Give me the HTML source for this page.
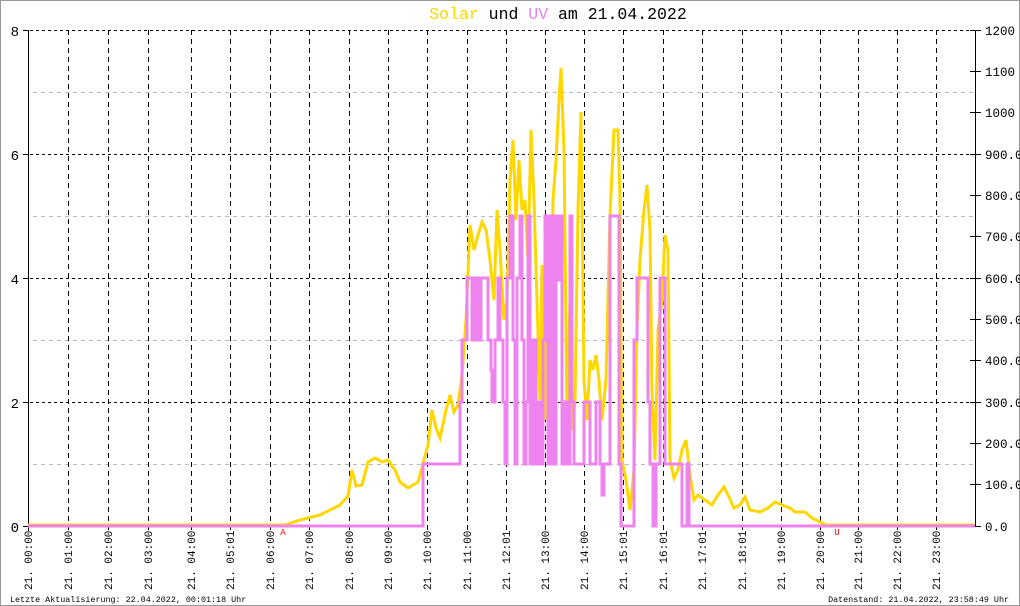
<!DOCTYPE html>
<html><head><meta charset="utf-8"><style>
html,body{margin:0;padding:0;background:#fff;}
svg{display:block;}
text{font-family:"Liberation Mono","DejaVu Sans Mono",monospace;}
</style></head><body>
<svg width="1020" height="606" viewBox="0 0 1020 606" xmlns="http://www.w3.org/2000/svg">
<rect x="0.5" y="0.5" width="1019" height="605" fill="#fff" stroke="#999" stroke-width="1"/>
<text x="558" y="19" font-size="16.5" text-anchor="middle"><tspan fill="#FFD700">Solar</tspan> und <tspan fill="#EE82EE">UV</tspan> am 21.04.2022</text>
<g stroke="#bbb" stroke-width="1" stroke-dasharray="4 4" shape-rendering="crispEdges">
<line x1="33" y1="92.5" x2="975" y2="92.5"/><line x1="33" y1="216.5" x2="975" y2="216.5"/><line x1="33" y1="340.5" x2="975" y2="340.5"/><line x1="33" y1="464.5" x2="975" y2="464.5"/>
</g>
<g stroke="#000" stroke-width="1" stroke-dasharray="3 3" shape-rendering="crispEdges">
<line x1="24" y1="30.5" x2="980" y2="30.5"/><line x1="24" y1="154.5" x2="980" y2="154.5"/><line x1="24" y1="278.5" x2="980" y2="278.5"/><line x1="24" y1="402.5" x2="980" y2="402.5"/>
</g>
<g stroke="#000" stroke-width="1" stroke-dasharray="5 4" shape-rendering="crispEdges">
<line x1="68.5" y1="30" x2="68.5" y2="531"/><line x1="108.5" y1="30" x2="108.5" y2="531"/><line x1="148.5" y1="30" x2="148.5" y2="531"/><line x1="191.5" y1="30" x2="191.5" y2="531"/><line x1="230.5" y1="30" x2="230.5" y2="531"/><line x1="270.5" y1="30" x2="270.5" y2="531"/><line x1="309.5" y1="30" x2="309.5" y2="531"/><line x1="349.5" y1="30" x2="349.5" y2="531"/><line x1="388.5" y1="30" x2="388.5" y2="531"/><line x1="427.5" y1="30" x2="427.5" y2="531"/><line x1="467.5" y1="30" x2="467.5" y2="531"/><line x1="506.5" y1="30" x2="506.5" y2="531"/><line x1="545.5" y1="30" x2="545.5" y2="531"/><line x1="584.5" y1="30" x2="584.5" y2="531"/><line x1="623.5" y1="30" x2="623.5" y2="531"/><line x1="663.5" y1="30" x2="663.5" y2="531"/><line x1="702.5" y1="30" x2="702.5" y2="531"/><line x1="742.5" y1="30" x2="742.5" y2="531"/><line x1="781.5" y1="30" x2="781.5" y2="531"/><line x1="820.5" y1="30" x2="820.5" y2="531"/><line x1="858.5" y1="30" x2="858.5" y2="531"/><line x1="897.5" y1="30" x2="897.5" y2="531"/><line x1="936.5" y1="30" x2="936.5" y2="531"/>
</g>
<g stroke="#000" stroke-width="1" shape-rendering="crispEdges">
<line x1="28.5" y1="30" x2="28.5" y2="531"/><line x1="975.5" y1="30" x2="975.5" y2="527"/>
<line x1="23" y1="30.5" x2="29" y2="30.5"/><line x1="23" y1="154.5" x2="29" y2="154.5"/><line x1="23" y1="278.5" x2="29" y2="278.5"/><line x1="23" y1="402.5" x2="29" y2="402.5"/><line x1="23" y1="526.5" x2="29" y2="526.5"/>
<line x1="970" y1="30.5" x2="981" y2="30.5"/><line x1="970" y1="71.5" x2="981" y2="71.5"/><line x1="970" y1="112.5" x2="981" y2="112.5"/><line x1="970" y1="154.5" x2="981" y2="154.5"/><line x1="970" y1="195.5" x2="981" y2="195.5"/><line x1="970" y1="236.5" x2="981" y2="236.5"/><line x1="970" y1="278.5" x2="981" y2="278.5"/><line x1="970" y1="319.5" x2="981" y2="319.5"/><line x1="970" y1="360.5" x2="981" y2="360.5"/><line x1="970" y1="402.5" x2="981" y2="402.5"/><line x1="970" y1="443.5" x2="981" y2="443.5"/><line x1="970" y1="484.5" x2="981" y2="484.5"/><line x1="970" y1="526.5" x2="981" y2="526.5"/>
</g>
<g font-size="14" fill="#000" text-anchor="end">
<text x="19" y="36">8</text><text x="19" y="160">6</text><text x="19" y="284">4</text><text x="19" y="408">2</text><text x="19" y="532">0</text>
</g>
<g font-size="12.5" fill="#000">
<text x="985" y="35">1200</text><text x="985" y="76">1100</text><text x="985" y="117">1000</text><text x="985" y="159">900.0</text><text x="985" y="200">800.0</text><text x="985" y="241">700.0</text><text x="985" y="283">600.0</text><text x="985" y="324">500.0</text><text x="985" y="365">400.0</text><text x="985" y="407">300.0</text><text x="985" y="448">200.0</text><text x="985" y="489">100.0</text><text x="985" y="531">0.0</text>
</g>
<polyline fill="none" stroke="#FFD700" stroke-width="3" points="28,525 285,525 300,520 320,515 340,505 348,496 352,470 356,486 362,485 368,462 375,458 382,462 388,460 395,470 400,482 408,488 418,482 424,460 428,445 432,410 436,428 440,438 446,410 450,395 454,412 458,405 462,375 466,320 470,225 474,250 478,235 482,222 486,230 490,260 494,300 497,210 500,250 504,320 507,300 510,180 513,140 516,220 519,160 522,210 525,200 528,260 531,130 534,200 537,300 540,400 542,265 545,420 548,250 550,400 553,200 556,160 559,100 561,68 564,150 567,420 570,300 572,430 575,400 578,210 581,112 584,380 587,420 590,360 593,370 596,355 599,380 602,420 606,380 610,215 614,130 618,130 620,200 622,460 626,480 630,510 634,470 637,330 640,260 644,210 647,185 650,230 652,390 655,460 658,330 662,300 665,235 668,250 670,460 674,478 678,470 682,450 686,440 690,475 694,500 698,495 705,500 712,505 718,495 724,487 728,495 734,508 740,505 745,497 750,510 760,512 768,508 775,502 782,505 790,508 795,512 805,512 812,518 820,522 826,525 975,525"/>
<polyline fill="none" stroke="#EE82EE" stroke-width="3" points="28,526 423,526 423,464 460,464 460,402 462,402 462,340 467,340 467,278 472,278 472,340 475,340 475,278 478,278 478,340 481,340 481,278 488,278 488,340 491,340 491,370 492,370 492,402 495,402 495,340 498,340 498,278 500,278 500,340 503,340 503,402 505,402 505,464 507,464 507,278 510,278 510,216 513,216 513,340 515,340 515,464 517,464 517,278 520,278 520,216 522,216 522,340 524,340 524,464 526,464 526,402 528,402 528,216 530,216 530,464 533,464 533,340 536,340 536,464 538,464 538,402 540,402 540,464 543,464 543,340 545,340 545,216 548,216 548,464 550,464 550,216 553,216 553,464 556,464 556,216 558,216 558,280 560,280 560,216 562,216 562,464 565,464 565,402 567,402 567,464 570,464 570,216 572,216 572,402 574,402 574,464 584,464 584,402 590,402 590,464 596,464 596,402 600,402 600,464 602,464 602,495 604,495 604,464 610,464 610,216 619,216 619,464 621,464 621,526 634,526 634,340 637,340 637,278 648,278 648,402 650,402 650,464 653,464 653,526 656,526 656,464 660,464 660,278 665,278 665,464 682,464 682,526 687,526 687,464 689,464 689,526 975,526"/>
<text x="283" y="535" font-size="9" fill="#e00" text-anchor="middle">A</text>
<text x="837" y="535" font-size="9" fill="#e00" text-anchor="middle">U</text>
<g font-size="11" fill="#000">
<text transform="translate(32,590) rotate(-90)">21. 00:00</text>
<text transform="translate(72,590) rotate(-90)">21. 01:00</text>
<text transform="translate(112,590) rotate(-90)">21. 02:00</text>
<text transform="translate(152,590) rotate(-90)">21. 03:00</text>
<text transform="translate(195,590) rotate(-90)">21. 04:00</text>
<text transform="translate(234,590) rotate(-90)">21. 05:01</text>
<text transform="translate(274,590) rotate(-90)">21. 06:00</text>
<text transform="translate(313,590) rotate(-90)">21. 07:00</text>
<text transform="translate(353,590) rotate(-90)">21. 08:00</text>
<text transform="translate(392,590) rotate(-90)">21. 09:00</text>
<text transform="translate(431,590) rotate(-90)">21. 10:00</text>
<text transform="translate(471,590) rotate(-90)">21. 11:00</text>
<text transform="translate(510,590) rotate(-90)">21. 12:01</text>
<text transform="translate(549,590) rotate(-90)">21. 13:00</text>
<text transform="translate(588,590) rotate(-90)">21. 14:00</text>
<text transform="translate(627,590) rotate(-90)">21. 15:01</text>
<text transform="translate(667,590) rotate(-90)">21. 16:01</text>
<text transform="translate(706,590) rotate(-90)">21. 17:01</text>
<text transform="translate(746,590) rotate(-90)">21. 18:01</text>
<text transform="translate(785,590) rotate(-90)">21. 19:00</text>
<text transform="translate(824,590) rotate(-90)">21. 20:00</text>
<text transform="translate(862,590) rotate(-90)">21. 21:00</text>
<text transform="translate(901,590) rotate(-90)">21. 22:00</text>
<text transform="translate(940,590) rotate(-90)">21. 23:00</text>
</g>
<text x="10" y="602" font-size="8.4" fill="#000">Letzte Aktualisierung: 22.04.2022, 00:01:18 Uhr</text>
<text x="1009" y="602" font-size="8.4" fill="#000" text-anchor="end">Datenstand: 21.04.2022, 23:58:49 Uhr</text>
</svg>
</body></html>
